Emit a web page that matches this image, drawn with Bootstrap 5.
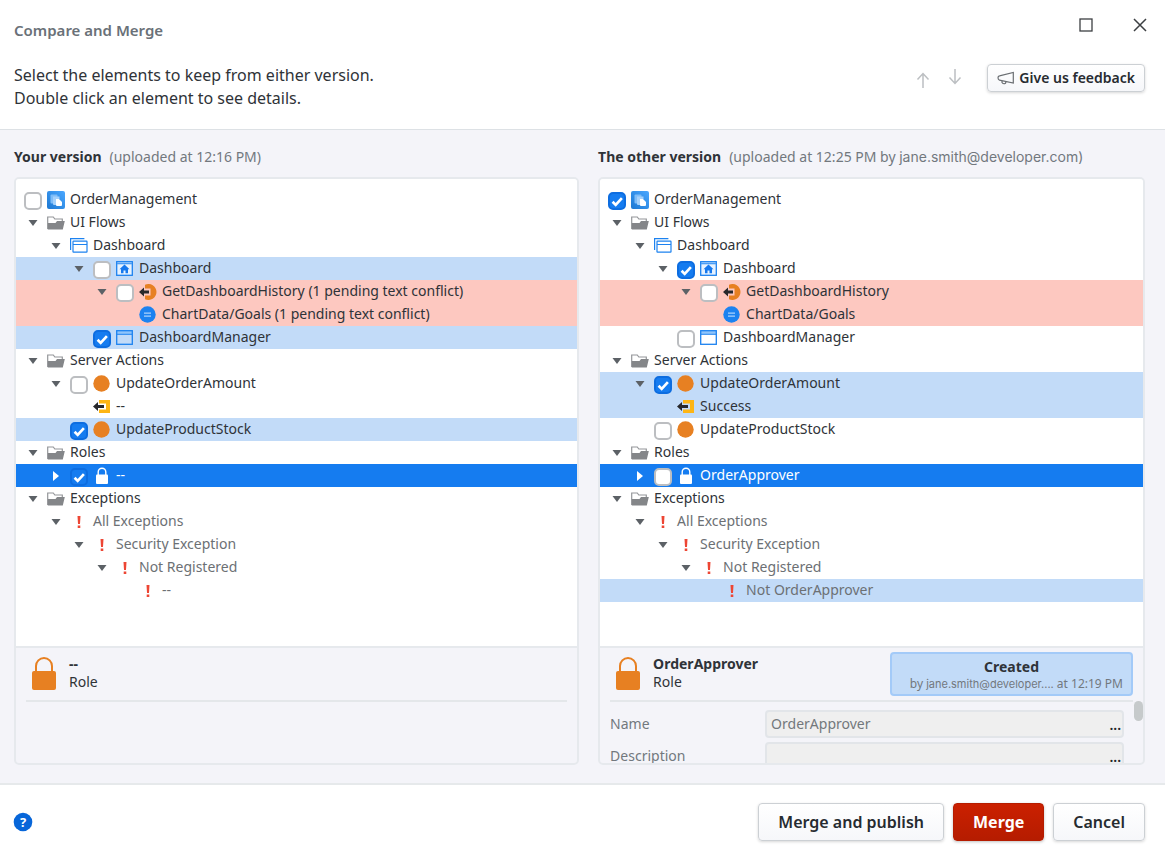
<!DOCTYPE html>
<html lang="en">
<head>
<meta charset="utf-8">
<meta name="viewport" content="width=device-width, initial-scale=1">
<title>Compare and Merge</title>
<link href="https://cdn.jsdelivr.net/npm/bootstrap@5.3.0/dist/css/bootstrap.min.css" rel="stylesheet">
<style>
body{font-family:"Noto Sans",sans-serif;font-size:14px;line-height:20px;color:#2f3338;background:#fff}
.muted{color:#72787e}
.inter{font-family:Inter,sans-serif}
.dialog-head{padding:0 20px 19px 14px;border-bottom:1px solid #dde1e5}
.dialog-title{font-size:15px;line-height:20px;font-weight:600;color:#6a7178;padding-top:20px}
.lead-text{font-size:16px;line-height:23px}
.win-btn,.nav-btn,.caret,.more{background:none;border:0;padding:0;display:flex;align-items:center;justify-content:center;color:inherit}
.win-btns{gap:38px;padding:17px 0 6px;margin-right:-3px}
.win-btn,.nav-btn{width:16px;height:16px}
.nav-btn{color:#bcbfc2}
.soft-btn{background:linear-gradient(#fff,#f6f7fa);border:1px solid #ccd0d4;border-radius:4px;font-weight:600;color:#272b30;box-shadow:0 1px 3px rgba(0,0,0,.16)}
.feedback{font-size:14px;line-height:20px;padding:3px 9px}
.work{background:#f4f4f9;padding:17px 20px 18px 14px;display:grid;grid-template-columns:31fr 30fr;grid-template-rows:auto 1fr;column-gap:19px;row-gap:10px}
.ver-title{font-size:14px;line-height:20px;font-weight:700}
.panel{border:2px solid #e6e9ed;border-radius:5px;min-width:0;overflow:hidden}
.tree{background:#fff;padding:9px 0 0;margin:0;list-style:none}
.node{height:23px;display:flex;align-items:center;padding-left:5px}
.lv1{padding-left:28px}.lv2{padding-left:51px}.lv3{padding-left:74px}.lv4{padding-left:97px}.lv5{padding-left:120px}
.node>.caret,.slot{width:23px;height:23px;flex:none;display:flex;align-items:center;justify-content:center}
.caret{color:#5c6166}
.node label,.node .name{padding:0 0 2px 3px;line-height:20px;white-space:nowrap}
.node .form-check-input{width:18px;height:18px;margin:3px 0 0;border:2px solid #bcbec1;border-radius:5px;background-color:#fff}
.node .form-check-input:checked{background-color:#157cf0;border-color:#0d6de0;background-size:15px;background-image:url("data:image/svg+xml,%3csvg xmlns='http://www.w3.org/2000/svg' viewBox='0 0 15 15'%3e%3cpath d='M3 8l3 3 6-6.500' fill='none' stroke='%23fff' stroke-width='2.600'/%3e%3c/svg%3e")}
.node.diff{background:#c2dbf8}
.node.conflict{background:#fdc8c0}
.node.chosen{background:#157cf0;color:#fff}
.chosen .caret{color:#fff}
.dim{color:#6c7074}
.detail{height:117px;border-top:2px solid #e6e9ed;padding:0 10px;overflow:hidden;position:relative}
.detail-head{height:54px;border-bottom:2px solid #e4e7ea;padding:4px 0 0 6px;display:flex}
.detail-name{margin-left:13px;padding-top:3px;line-height:18px}
.created{width:243px;height:44px;background:#c2dbf8;border:2px solid #a3caf8;border-radius:4px;line-height:17px;padding-top:4px}
.created .who{font-size:12px}
.created .inter{font-size:11px}
.prop{padding-right:9px;margin-bottom:4px;height:28px}
.prop label{width:155px;flex:none}
.prop input{height:28px;padding:2px 30px 4px 4px;font-size:14px;border:2px solid #e2e5e9;border-radius:4px;background:#efefef;color:#73787c}
.more{position:absolute;right:3px;bottom:3px;line-height:20px;font-weight:600}
.thumb{position:absolute;right:0;top:53px;width:9px;height:20px;border-radius:5px;background:#c6cacb}
.dialog-foot{border-top:2px solid #e6e9eb;padding:18px 20px 22px 13px;gap:9px}
.foot-btn{font-size:16px;line-height:24px;padding:6px 19px}
.merge{background:linear-gradient(#cb2000,#b51c00);border:1px solid #b51c00;border-radius:4px;color:#fff;font-weight:700;box-shadow:0 1px 3px rgba(0,0,0,.25)}
.help{display:flex}
</style>
</head>
<body class="d-flex flex-column min-vh-100">
<svg width="0" height="0" class="position-absolute" aria-hidden="true">
<defs>
<linearGradient id="appg" x1="0" y1="1" x2="1" y2="0"><stop stop-color="#1c78d2"/><stop offset="1" stop-color="#4aa7ff"/></linearGradient>
<symbol id="down" viewBox="0 0 10 6"><path d="M.5 0h9L5 6z" fill="currentColor"/></symbol>
<symbol id="right" viewBox="0 0 6 10"><path d="M0 0v10l6-5z" fill="currentColor"/></symbol>
<symbol id="app" viewBox="0 0 18 18"><rect width="18" height="18" rx="2" fill="url(#appg)"/><rect x="3.500" y="3.500" width="7" height="9" rx="1" fill="#7fbdf8"/><path d="M6 5.500h6.500V8H9v6H7q-1 0-1-1z" fill="#a5d1fb"/><path d="M9 8h3l3 3v3q0 1-1 1h-4q-1 0-1-1z" fill="#fff"/></symbol>
<symbol id="folder" viewBox="0 0 18 14"><path d="M.7 13V1h5.600l1.500 2h7.500v2.500" fill="none" stroke="#949699" stroke-width="1.200"/><path d="M.8 13.500V7h7.700L10 5h7.800L15.800 13.500z" fill="#848689"/></symbol>
<symbol id="flow" viewBox="0 0 18 15"><path d="M.6 12V.7h13.800" fill="none" stroke="#1c82f0" stroke-width="1.200"/><rect x="3" y="3.200" width="14" height="11" rx=".5" fill="#fff" stroke="#1c82f0" stroke-width="1.200"/><path d="M3 6.500h14" stroke="#1c82f0" stroke-width="1.200"/></symbol>
<symbol id="screen" viewBox="0 0 17 15"><path d="M1 1h15v3H1z" fill="#91c5fa"/><rect x=".7" y=".7" width="15.600" height="13.600" fill="none" stroke="#1c82f0" stroke-width="1.300"/><path d="M1 4.300h15" stroke="#1c82f0" stroke-width="1"/></symbol>
<symbol id="home" viewBox="0 0 17 15"><rect x=".7" y=".7" width="15.600" height="13.600" fill="#e6f2ff" stroke="#1c82f0" stroke-width="1.300"/><path d="M1 2.500h15" stroke="#4b9df5" stroke-width="1.600"/><path d="M8.500 3.500L3.500 8.200H5v4h2.500V9.500h2v2.700H12v-4h1.500z" fill="#1578ee"/></symbol>
<symbol id="ball" viewBox="0 0 17 17"><circle cx="8.500" cy="8.500" r="8.200" fill="#e78022"/></symbol>
<symbol id="arrowball" viewBox="0 0 18 16"><path d="M6 .8A8 8 0 1 1 6 15.200V11.500h5.500v-7H6z" fill="#e78022"/><path d="M0 8l5-4.500v3h5v3H5v3z" fill="#27282c"/></symbol>
<symbol id="equal" viewBox="0 0 17 17"><circle cx="8.500" cy="8.500" r="8.200" fill="#1c82f0"/><path d="M5 7.200h7M5 10.200h7" stroke="#a9d2fc" stroke-width="1.200"/></symbol>
<symbol id="output" viewBox="0 0 17 15"><path d="M6 1h11v13H6v-3.500h7v-6H6z" fill="#fdb515"/><path d="M0 7.500L5 3v3h6v3H5v3z" fill="#27282c"/></symbol>
<symbol id="lock" viewBox="0 0 24 34"><path d="M4 16V10a8 8 0 0 1 16 0v6" fill="none" stroke="currentColor" stroke-width="2"/><rect x="0" y="15" width="24" height="19" rx="2" fill="currentColor"/></symbol>
<symbol id="slock" viewBox="0 0 12 17"><path d="M2.200 8V5a3.800 3.800 0 0 1 7.600 0v3" fill="none" stroke="currentColor" stroke-width="1.400"/><rect y="7.500" width="12" height="9.500" rx="1" fill="currentColor"/></symbol>
<symbol id="bang" viewBox="0 0 4 12"><path d="M.5 0h3L3 8H1zM.7 9.500h2.600V12H.7z" fill="#ed4634"/></symbol>
</defs>
</svg>

<header class="dialog-head">
  <div class="d-flex justify-content-between">
    <h1 class="dialog-title m-0">Compare and Merge</h1>
    <div class="win-btns d-flex">
      <button class="win-btn" aria-label="Maximize"><svg width="14" height="14"><rect x="1" y="1" width="12" height="12" fill="none" stroke="#3c3f42" stroke-width="1.300"/></svg></button>
      <button class="win-btn" aria-label="Close"><svg width="14" height="14"><path d="M1 1l12 12M13 1L1 13" stroke="#3c3f42" stroke-width="1.500"/></svg></button>
    </div>
  </div>
  <div class="d-flex justify-content-between pt-4">
    <p class="lead-text m-0">Select the elements to keep from either version.<br>Double click an element to see details.</p>
    <div class="d-flex align-items-start">
      <div class="d-flex gap-3 me-4 pt-1">
        <button class="nav-btn mt-1" aria-label="Previous"><svg width="14" height="17"><path d="M7 16V2M1.500 7.500L7 1.500l5.500 6" fill="none" stroke="currentColor" stroke-width="1.500"/></svg></button>
        <button class="nav-btn" aria-label="Next"><svg width="14" height="17"><path d="M7 1v14M1.500 9.500L7 15.500l5.500-6" fill="none" stroke="currentColor" stroke-width="1.500"/></svg></button>
      </div>
      <button class="soft-btn feedback d-flex align-items-center gap-1"><svg width="18" height="14" viewBox="0 0 18 14"><path d="M16.300 1.500v10.500L2.500 9.200Q1 8.500 1 6.800T2.500 4.800zM5 10v1.500q1.500 2 3.500.8l.5-1.500" fill="none" stroke="#6a6e72" stroke-width="1.200"/></svg>Give us feedback</button>
    </div>
  </div>
</header>

<main class="work flex-grow-1">
  <div><span class="ver-title">Your version</span><span class="muted ms-2">(uploaded at 12:16 PM)</span></div>
  <div class="text-nowrap"><span class="ver-title">The other version</span><span class="muted ms-2">(uploaded at 12:25 PM by <span class="inter">jane.smith@developer.com)</span></span></div>

  <section class="panel d-flex flex-column">
    <ul class="tree flex-grow-1">
      <li class="node"><span class="slot"><input class="form-check-input" type="checkbox" id="a0"></span><span class="slot"><svg width="18" height="18"><use href="#app"/></svg></span><label for="a0">OrderManagement</label></li>
      <li class="node"><button class="caret" aria-label="Collapse"><svg width="10" height="6"><use href="#down"/></svg></button><span class="slot"><svg width="18" height="14"><use href="#folder"/></svg></span><span class="name">UI Flows</span></li>
      <li class="node lv1"><button class="caret" aria-label="Collapse"><svg width="10" height="6"><use href="#down"/></svg></button><span class="slot"><svg width="18" height="15"><use href="#flow"/></svg></span><span class="name">Dashboard</span></li>
      <li class="node lv2 diff"><button class="caret" aria-label="Collapse"><svg width="10" height="6"><use href="#down"/></svg></button><span class="slot"><input class="form-check-input" type="checkbox" id="a3"></span><span class="slot"><svg width="17" height="15"><use href="#home"/></svg></span><label for="a3">Dashboard</label></li>
      <li class="node lv3 conflict"><button class="caret" aria-label="Collapse"><svg width="10" height="6"><use href="#down"/></svg></button><span class="slot"><input class="form-check-input" type="checkbox" id="a4"></span><span class="slot"><svg width="18" height="16"><use href="#arrowball"/></svg></span><label for="a4">GetDashboardHistory (1 pending text conflict)</label></li>
      <li class="node lv5 conflict"><span class="slot"><svg width="17" height="17"><use href="#equal"/></svg></span><span class="name">ChartData/Goals (1 pending text conflict)</span></li>
      <li class="node lv3 diff"><span class="slot"><input class="form-check-input" type="checkbox" id="a6" checked></span><span class="slot"><svg width="17" height="15"><use href="#screen"/></svg></span><label for="a6">DashboardManager</label></li>
      <li class="node"><button class="caret" aria-label="Collapse"><svg width="10" height="6"><use href="#down"/></svg></button><span class="slot"><svg width="18" height="14"><use href="#folder"/></svg></span><span class="name">Server Actions</span></li>
      <li class="node lv1"><button class="caret" aria-label="Collapse"><svg width="10" height="6"><use href="#down"/></svg></button><span class="slot"><input class="form-check-input" type="checkbox" id="a8"></span><span class="slot"><svg width="17" height="17"><use href="#ball"/></svg></span><label for="a8">UpdateOrderAmount</label></li>
      <li class="node lv3"><span class="slot"><svg width="17" height="15"><use href="#output"/></svg></span><span class="name">--</span></li>
      <li class="node lv2 diff"><span class="slot"><input class="form-check-input" type="checkbox" id="a10" checked></span><span class="slot"><svg width="17" height="17"><use href="#ball"/></svg></span><label for="a10">UpdateProductStock</label></li>
      <li class="node"><button class="caret" aria-label="Collapse"><svg width="10" height="6"><use href="#down"/></svg></button><span class="slot"><svg width="18" height="14"><use href="#folder"/></svg></span><span class="name">Roles</span></li>
      <li class="node lv1 chosen"><button class="caret" aria-label="Expand"><svg width="6" height="10"><use href="#right"/></svg></button><span class="slot"><input class="form-check-input" type="checkbox" id="a12" checked></span><span class="slot"><svg width="12" height="17"><use href="#slock"/></svg></span><label for="a12">--</label></li>
      <li class="node"><button class="caret" aria-label="Collapse"><svg width="10" height="6"><use href="#down"/></svg></button><span class="slot"><svg width="18" height="14"><use href="#folder"/></svg></span><span class="name">Exceptions</span></li>
      <li class="node lv1 dim"><button class="caret" aria-label="Collapse"><svg width="10" height="6"><use href="#down"/></svg></button><span class="slot"><svg width="4" height="12"><use href="#bang"/></svg></span><span class="name">All Exceptions</span></li>
      <li class="node lv2 dim"><button class="caret" aria-label="Collapse"><svg width="10" height="6"><use href="#down"/></svg></button><span class="slot"><svg width="4" height="12"><use href="#bang"/></svg></span><span class="name">Security Exception</span></li>
      <li class="node lv3 dim"><button class="caret" aria-label="Collapse"><svg width="10" height="6"><use href="#down"/></svg></button><span class="slot"><svg width="4" height="12"><use href="#bang"/></svg></span><span class="name">Not Registered</span></li>
      <li class="node lv5 dim"><span class="slot"><svg width="4" height="12"><use href="#bang"/></svg></span><span class="name">--</span></li>
    </ul>
    <div class="detail">
      <div class="detail-head">
        <svg class="mt-1" width="24" height="34" color="#e78022"><use href="#lock"/></svg>
        <div class="detail-name"><div class="fw-bold">--</div><div>Role</div></div>
      </div>
    </div>
  </section>

  <section class="panel d-flex flex-column">
    <ul class="tree flex-grow-1">
      <li class="node"><span class="slot"><input class="form-check-input" type="checkbox" id="b0" checked></span><span class="slot"><svg width="18" height="18"><use href="#app"/></svg></span><label for="b0">OrderManagement</label></li>
      <li class="node"><button class="caret" aria-label="Collapse"><svg width="10" height="6"><use href="#down"/></svg></button><span class="slot"><svg width="18" height="14"><use href="#folder"/></svg></span><span class="name">UI Flows</span></li>
      <li class="node lv1"><button class="caret" aria-label="Collapse"><svg width="10" height="6"><use href="#down"/></svg></button><span class="slot"><svg width="18" height="15"><use href="#flow"/></svg></span><span class="name">Dashboard</span></li>
      <li class="node lv2"><button class="caret" aria-label="Collapse"><svg width="10" height="6"><use href="#down"/></svg></button><span class="slot"><input class="form-check-input" type="checkbox" id="b3" checked></span><span class="slot"><svg width="17" height="15"><use href="#home"/></svg></span><label for="b3">Dashboard</label></li>
      <li class="node lv3 conflict"><button class="caret" aria-label="Collapse"><svg width="10" height="6"><use href="#down"/></svg></button><span class="slot"><input class="form-check-input" type="checkbox" id="b4"></span><span class="slot"><svg width="18" height="16"><use href="#arrowball"/></svg></span><label for="b4">GetDashboardHistory</label></li>
      <li class="node lv5 conflict"><span class="slot"><svg width="17" height="17"><use href="#equal"/></svg></span><span class="name">ChartData/Goals</span></li>
      <li class="node lv3"><span class="slot"><input class="form-check-input" type="checkbox" id="b6"></span><span class="slot"><svg width="17" height="15"><use href="#screen"/></svg></span><label for="b6">DashboardManager</label></li>
      <li class="node"><button class="caret" aria-label="Collapse"><svg width="10" height="6"><use href="#down"/></svg></button><span class="slot"><svg width="18" height="14"><use href="#folder"/></svg></span><span class="name">Server Actions</span></li>
      <li class="node lv1 diff"><button class="caret" aria-label="Collapse"><svg width="10" height="6"><use href="#down"/></svg></button><span class="slot"><input class="form-check-input" type="checkbox" id="b8" checked></span><span class="slot"><svg width="17" height="17"><use href="#ball"/></svg></span><label for="b8">UpdateOrderAmount</label></li>
      <li class="node lv3 diff"><span class="slot"><svg width="17" height="15"><use href="#output"/></svg></span><span class="name">Success</span></li>
      <li class="node lv2"><span class="slot"><input class="form-check-input" type="checkbox" id="b10"></span><span class="slot"><svg width="17" height="17"><use href="#ball"/></svg></span><label for="b10">UpdateProductStock</label></li>
      <li class="node"><button class="caret" aria-label="Collapse"><svg width="10" height="6"><use href="#down"/></svg></button><span class="slot"><svg width="18" height="14"><use href="#folder"/></svg></span><span class="name">Roles</span></li>
      <li class="node lv1 chosen"><button class="caret" aria-label="Expand"><svg width="6" height="10"><use href="#right"/></svg></button><span class="slot"><input class="form-check-input" type="checkbox" id="b12"></span><span class="slot"><svg width="12" height="17"><use href="#slock"/></svg></span><label for="b12">OrderApprover</label></li>
      <li class="node"><button class="caret" aria-label="Collapse"><svg width="10" height="6"><use href="#down"/></svg></button><span class="slot"><svg width="18" height="14"><use href="#folder"/></svg></span><span class="name">Exceptions</span></li>
      <li class="node lv1 dim"><button class="caret" aria-label="Collapse"><svg width="10" height="6"><use href="#down"/></svg></button><span class="slot"><svg width="4" height="12"><use href="#bang"/></svg></span><span class="name">All Exceptions</span></li>
      <li class="node lv2 dim"><button class="caret" aria-label="Collapse"><svg width="10" height="6"><use href="#down"/></svg></button><span class="slot"><svg width="4" height="12"><use href="#bang"/></svg></span><span class="name">Security Exception</span></li>
      <li class="node lv3 dim"><button class="caret" aria-label="Collapse"><svg width="10" height="6"><use href="#down"/></svg></button><span class="slot"><svg width="4" height="12"><use href="#bang"/></svg></span><span class="name">Not Registered</span></li>
      <li class="node lv5 dim diff"><span class="slot"><svg width="4" height="12"><use href="#bang"/></svg></span><span class="name">Not OrderApprover</span></li>
    </ul>
    <div class="detail">
      <div class="detail-head">
        <svg class="mt-1" width="24" height="34" color="#e78022"><use href="#lock"/></svg>
        <div class="detail-name"><div class="fw-bold">OrderApprover</div><div>Role</div></div>
        <div class="created ms-auto text-center"><div class="fw-bold">Created</div><div class="who muted text-end pe-2">by <span class="inter">jane.smith@developer....</span> at 12:19 PM</div></div>
      </div>
      <div class="pt-2 muted">
        <div class="prop d-flex"><label for="pname" class="pt-1">Name</label><div class="position-relative flex-grow-1"><input id="pname" class="w-100" value="OrderApprover" readonly><button class="more text-dark" aria-label="Edit name">...</button></div></div>
        <div class="prop d-flex"><label for="pdesc" class="pt-1">Description</label><div class="position-relative flex-grow-1"><input id="pdesc" class="w-100" readonly><button class="more text-dark" aria-label="Edit description">...</button></div></div>
      </div>
      <div class="thumb"></div>
    </div>
  </section>
</main>

<footer class="dialog-foot d-flex align-items-center">
  <a href="#" class="help me-auto text-decoration-none" aria-label="Help"><svg width="20" height="20"><circle cx="10" cy="10" r="9.300" fill="#0766d9"/><text x="10" y="15" text-anchor="middle" font-size="13" font-weight="700" fill="#fff">?</text></svg></a>
  <button class="soft-btn foot-btn">Merge and publish</button>
  <button class="merge foot-btn">Merge</button>
  <button class="soft-btn foot-btn">Cancel</button>
</footer>
<script src="https://cdn.jsdelivr.net/npm/bootstrap@5.3.0/dist/js/bootstrap.bundle.min.js"></script>
</body>
</html>
